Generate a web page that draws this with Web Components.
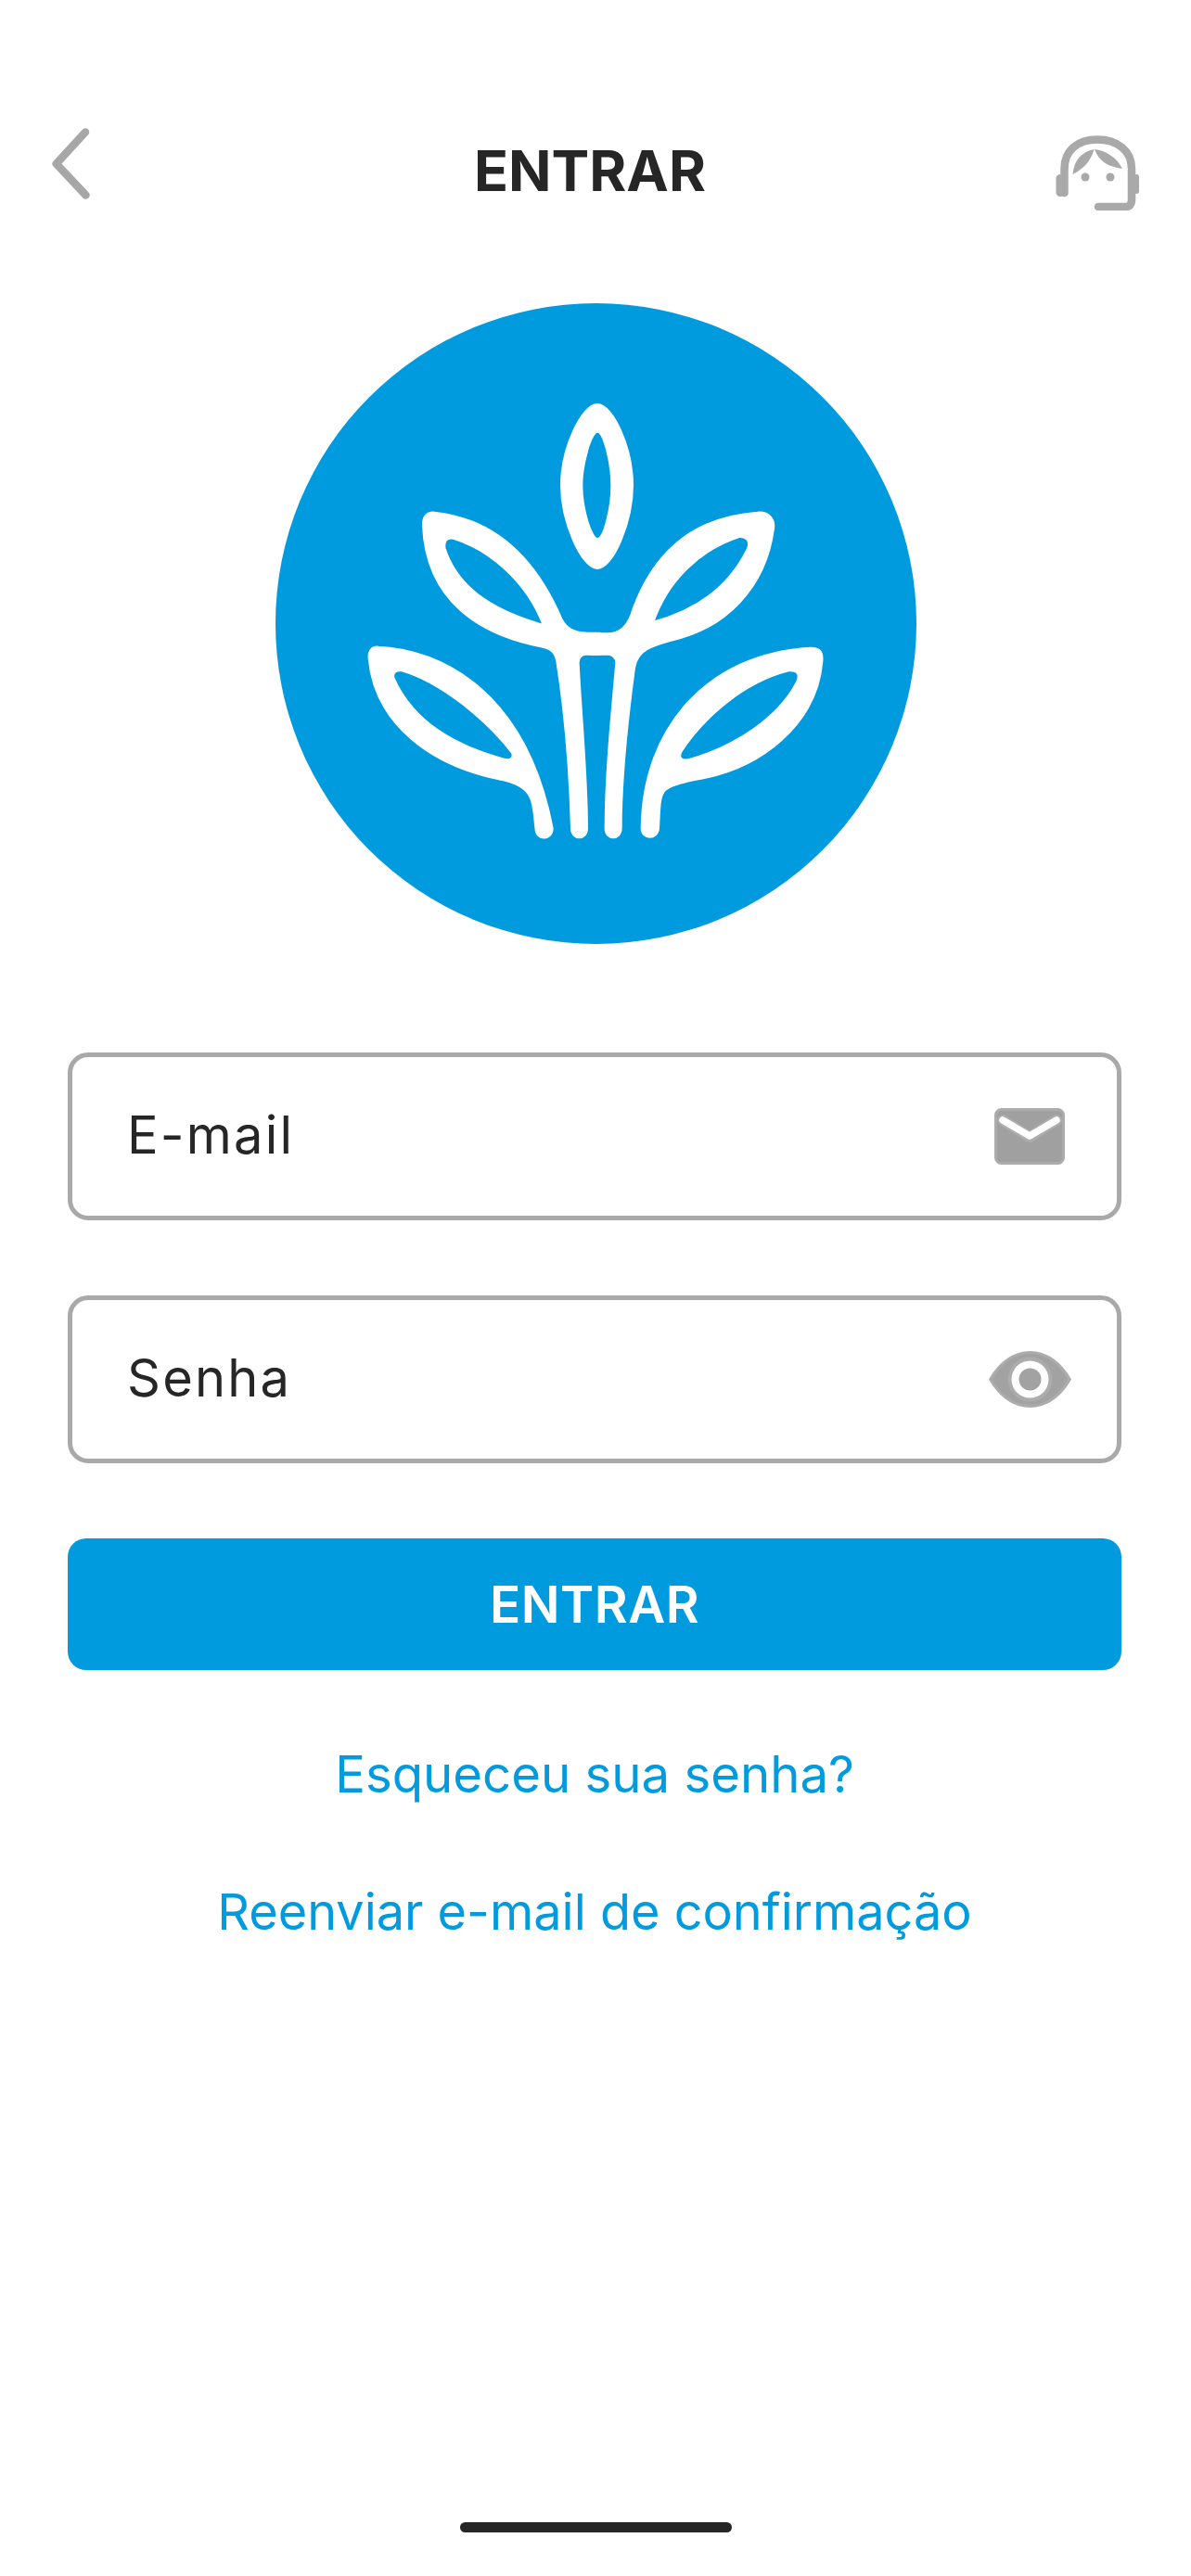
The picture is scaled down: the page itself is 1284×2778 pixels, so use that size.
<!DOCTYPE html>
<html lang="pt-BR"><head><meta charset="utf-8"><title>Entrar</title>
<style>
html,body{margin:0;padding:0;background:#fff}
body{font-family:Inter,"Liberation Sans",sans-serif;color:#262626}
login-screen{--blue:#009bde;--grey:#a9a9a9;--ink:#262626}
</style></head><body>
<login-screen>
  <app-header slot="header">ENTRAR</app-header>
  <logo-mark slot="logo"></logo-mark>
  <text-field icon="mail">E-mail</text-field>
  <text-field icon="eye">Senha</text-field>
  <primary-button>ENTRAR</primary-button>
  <text-link>Esqueceu sua senha?</text-link>
  <text-link>Reenviar e-mail de confirmação</text-link>
</login-screen>
<script>
function def(name, html){
  customElements.define(name, class extends HTMLElement{
    constructor(){super();this.attachShadow({mode:'open'}).innerHTML=typeof html==='function'?html(this):html;}
  });
}
const ICONS={
 mail:`<svg width="76" height="61" viewBox="0 0 76 61"><rect x="1.500" y="1.500" width="73" height="58" rx="6" fill="#a0a0a0" stroke="#acacac" stroke-width="3"/><path d="M9 13 38 31 67 13" fill="none" stroke="#adadad" stroke-width="12" stroke-linecap="round" stroke-linejoin="round"/><path d="M9 13 38 30 67 13" fill="none" stroke="#fff" stroke-width="7.500" stroke-linecap="round" stroke-linejoin="round"/></svg>`,
 eye:`<svg width="89" height="61" viewBox="0 0 89 61"><path d="M0 30.500C11 11 27 0 44.500 0S78 11 89 30.500C78 50 62 61 44.500 61S11 50 0 30.500Z" fill="#acacac"/><path d="M4 30.500C14 13 28 3 44.500 3S75 13 85 30.500C75 48 61 58 44.500 58S14 48 4 30.500Z" fill="#a2a2a2"/><circle cx="44.500" cy="30.500" r="24" fill="#acacac"/><circle cx="44.500" cy="30.500" r="20" fill="#fff"/><circle cx="44.500" cy="30.500" r="12" fill="#a2a2a2"/></svg>`
};
def('login-screen',`<style>
:host{display:flex;flex-direction:column;height:2778px;box-sizing:border-box;padding-top:140px;background:#fff;overflow:hidden}
.form{display:flex;flex-direction:column;gap:0;padding:0 75px 0 73px;margin-top:117px}
.logo{display:flex;justify-content:center;margin-top:77px}
.spacer{flex:1}
.home{align-self:center;width:293px;height:11px;border-radius:6px;background:var(--ink);margin-bottom:47px}
</style>
<slot name="header"></slot>
<div class="logo"><slot name="logo"></slot></div>
<div class="form"><slot></slot></div>
<div class="spacer"></div>
<div class="home"></div>`);
def('app-header',`<style>
:host{display:grid;grid-template-columns:1fr auto 1fr;align-items:center;height:110px;padding:0 56px;box-sizing:border-box}
h1{margin:0;font:700 61px/72px Inter,sans-serif;color:var(--ink);padding-right:12px;margin-top:-22px}
.l{justify-self:start;display:block}
.r{justify-self:end;display:block}
</style>
<svg class="l" width="41" height="77" viewBox="0 0 41 77" style="margin-top:-38px"><path d="M36 4.500 4.700 38.700 36.500 72.500" fill="none" stroke="#a7a7a7" stroke-width="8.500" stroke-linecap="round" stroke-linejoin="round"/></svg>
<h1><slot></slot></h1>
<svg class="r" width="90" height="81" viewBox="38 26 90 81" style="margin-top:-18px">
  <path d="M47.500 88V62C47.500 42 62 30.500 83 30.500S120 42 120 62V96C120 100 118 103 114 103H84" fill="none" stroke="#a9a9a9" stroke-width="8.500" stroke-linecap="round" stroke-linejoin="round"/>
  <rect x="38.500" y="68" width="9" height="24" rx="4.500" fill="#a9a9a9"/><rect x="122" y="68" width="6" height="21" rx="3" fill="#a9a9a9"/>
  <path d="M79.500 41C66 44 58 52 56.500 68 68 62 76 54 79.500 41Z" fill="#a9a9a9"/><path d="M80 41C92 42 104 50 110 62 96 60 85 55 80 41Z" fill="#a9a9a9"/>
  <circle cx="70" cy="71" r="4.500" fill="#a9a9a9"/><circle cx="97" cy="71" r="4.500" fill="#a9a9a9"/>
</svg>`);
def('logo-mark',`<style>:host{display:block;width:691px;height:691px}svg{display:block}</style>
<svg width="691" height="691" viewBox="297 327 691 691">
<circle cx="642.500" cy="672.500" r="345.500" fill="#009bde"/>
<g fill="#fff" stroke="#fff" stroke-width="10" stroke-linejoin="round" fill-rule="evenodd" transform="translate(380 420) scale(.33333)">
<path d="M792 50C840 50 904 190 904 310C904 430 840 577 792 577C744 577 677 430 677 310C677 190 744 50 792 50ZM792 135C770 135 740 240 740 310C740 385 770 485 792 485C815 485 840 385 840 310C840 240 815 135 792 135Z"/>
<path d="M265 400C405 415 565 487 675 745C692 775 715 790 760 790L800 790 800 855 755 855C740 855 728 868 729 885C737 1050 757 1250 757 1420C757 1457 710 1457 710 1420C705 1250 690 1050 663 880C657 845 640 837 610 830C415 792 240 685 230 440C229 415 240 398 265 400ZM325 480C305 476 292 490 297 515C345 660 480 725 620 765C565 617 440 515 325 480Z"/>
<path d="M85 835C285 844 560 977 645 1420C645 1457 597 1457 595 1425C590 1390 590 1340 575 1315C555 1280 520 1270 480 1260C260 1217 75 1085 55 870C53 850 60 833 85 835ZM160 908C140 905 126 915 132 935C197 1080 332 1155 490 1198C510 1203 525 1195 518 1175C435 1067 287 945 160 908Z"/>
</g>
<g fill="#fff" stroke="#fff" stroke-width="10" stroke-linejoin="round" fill-rule="evenodd" transform="translate(640 420) scale(.33333)">
<path d="M-8 792L50 792C85 790 110 765 123 730C180 560 297 417 530 400C560 397 585 415 580 450C555 640 425 772 250 810C190 827 140 840 130 900C110 1050 87 1250 87 1420C87 1457 40 1457 40 1420C40 1250 60 1050 75 885C75 868 62 855 45 855L-8 855ZM470 475C342 517 237 617 190 755C335 717 442 635 500 515C510 490 495 472 470 475Z"/>
<path d="M700 838C730 837 740 850 737 880C720 1080 542 1227 330 1260C280 1270 245 1280 230 1295C210 1315 212 1350 208 1420C205 1455 157 1455 157 1420C160 1090 375 857 700 838ZM630 908C485 945 357 1057 282 1170C272 1190 280 1203 305 1200C455 1160 602 1062 660 945C670 920 660 906 630 908Z"/>
</g>
</svg>`);
def('text-field',el=>`<style>
:host{display:flex;align-items:center;justify-content:space-between;box-sizing:border-box;height:181px;border:5px solid var(--grey);border-radius:22px;padding:0 ${el.getAttribute('icon')==='eye'?'49px':'56px'} 0 59px;margin-bottom:81px;font:400 56px/66px Inter,sans-serif;letter-spacing:2.200px;color:var(--ink)}
span{position:relative;top:-2px}
svg{display:block}
</style><span><slot></slot></span>${ICONS[el.getAttribute('icon')]}`);
def('primary-button',`<style>
:host{display:flex;align-items:center;justify-content:center;box-sizing:border-box;height:142px;margin-top:0;border-radius:20px;background:var(--blue);color:#fff;font:600 55px/64px Inter,sans-serif;letter-spacing:.5px}
</style><slot></slot>`);
def('text-link',`<style>
:host{display:block;text-align:center;color:var(--blue);font:400 54.500px/64px Inter,sans-serif;margin-top:85px}
:host(:nth-of-type(1)){margin-top:80px}
:host(:nth-of-type(2)){font-size:54px}
</style><slot></slot>`);
</script>
</body></html>
